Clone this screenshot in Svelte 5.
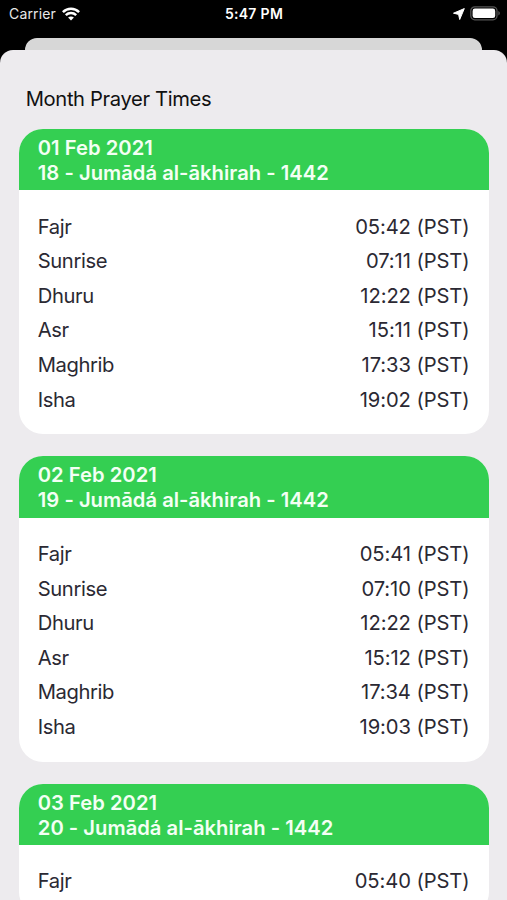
<script lang="ts">
	type Day = { date: string; hijri: string; times: string[] };

	const prayers = ["Fajr", "Sunrise", "Dhuru", "Asr", "Maghrib", "Isha"];

	const days: Day[] = [
		{
			date: "01 Feb 2021",
			hijri: "18 - Jumādá al-ākhirah - 1442",
			times: ["05:42", "07:11", "12:22", "15:11", "17:33", "19:02"],
		},
		{
			date: "02 Feb 2021",
			hijri: "19 - Jumādá al-ākhirah - 1442",
			times: ["05:41", "07:10", "12:22", "15:12", "17:34", "19:03"],
		},
		{
			date: "03 Feb 2021",
			hijri: "20 - Jumādá al-ākhirah - 1442",
			times: ["05:40"],
		},
	];
</script>

<div class="screen">
	<header class="status">
		<div class="carrier">
			<span>Carrier</span>
			<svg width="18" height="14" viewBox="0 0 18 14" aria-hidden="true">
				<g fill="none" stroke="#fff" stroke-width="2.5">
					<path d="M0.9 5.1C5.5 0.6 12.5 0.6 17.1 5.1" />
					<path d="M3.8 8.2C6.8 5.4 11.2 5.4 14.2 8.2" />
				</g>
				<path d="M6.1 10.5C7.8 9 10.2 9 11.9 10.5L9 13.5Z" fill="#fff" />
			</svg>
		</div>
		<span class="clock">5:47 PM</span>
		<div class="indicators">
			<svg width="12" height="12" viewBox="0 0 12 12" aria-hidden="true">
				<path d="M11.3 0.6L0.5 5.2L5.6 6.4L6.7 11.5Z" fill="#fff" stroke="#fff" stroke-width="1" stroke-linejoin="round" />
			</svg>
			<svg width="31" height="15" viewBox="0 0 31 15" aria-hidden="true">
				<rect x="0.8" y="0.8" width="26.2" height="13" rx="4" fill="none" stroke="#555" stroke-width="1.3" />
				<rect x="2.6" y="2.6" width="22.6" height="9.4" rx="2.3" fill="#fff" />
				<path d="M28.3 5.1C30.4 5.9 30.4 8.7 28.3 9.5Z" fill="#555" />
			</svg>
		</div>
	</header>

	<div class="behind"></div>

	<main class="sheet">
		<h1>Month Prayer Times</h1>
		{#each days as day}
			<section class="card">
				<div class="card-header">
					<div>{day.date}</div>
					<div>{day.hijri}</div>
				</div>
				<ul>
					{#each day.times as time, i}
						<li>
							<span class="name">{prayers[i]}</span>
							<span>{time} (PST)</span>
						</li>
					{/each}
				</ul>
			</section>
		{/each}
	</main>
</div>

<style>
	:global(body) {
		margin: 0;
		background: #000;
	}

	.screen {
		display: flex;
		flex-direction: column;
		height: 900px;
		overflow: hidden;
		background: #000;
		font-family: Inter, "Liberation Sans", sans-serif;
	}

	.status {
		display: grid;
		grid-template-columns: 1fr auto 1fr;
		align-items: center;
		flex: none;
		height: 27px;
		margin-bottom: 11px;
		padding: 0 6px 0 9px;
		color: #e8e8e8;
		font-size: 14px;
	}
	.carrier {
		display: flex;
		align-items: center;
		gap: 6px;
		letter-spacing: 0.15px;
	}
	.clock {
		margin-right: 2px;
		color: #fff;
		font-size: 14px;
		font-weight: 600;
		letter-spacing: 0.3px;
	}
	.indicators {
		display: flex;
		justify-content: flex-end;
		align-items: center;
		gap: 5px;
	}

	.behind {
		flex: none;
		height: 12px;
		margin: 0 25px;
		border-radius: 12px 12px 0 0;
		background: #d7d7d7;
	}

	.sheet {
		flex: 1;
		min-height: 0;
		padding: 36.3px 18.5px 0 19.2px;
		border-radius: 13px 13px 0 0;
		background: #edebee;
	}

	h1 {
		margin: 0 0 17.8px 6.5px;
		color: #111;
		font-size: 20.2px;
		font-weight: 400;
		line-height: 25px;
		letter-spacing: -0.36px;
	}

	.card {
		margin-bottom: 22px;
		border-radius: 24px;
		background: #fff;
		overflow: hidden;
	}
	.card-header {
		padding: 7px 18.6px 4.8px;
		background: #34cf52;
		color: #f3fff4;
		font-size: 20.2px;
		font-weight: 600;
		line-height: 24.8px;
		letter-spacing: 0.02px;
	}

	ul {
		margin: 0;
		padding: 19.2px 19px 17.2px 18.6px;
		list-style: none;
	}
	li {
		display: flex;
		justify-content: space-between;
		color: #2b2933;
		font-size: 20.2px;
		line-height: 34.6px;
		letter-spacing: -0.1px;
	}
	.name {
		letter-spacing: -0.4px;
	}
</style>
